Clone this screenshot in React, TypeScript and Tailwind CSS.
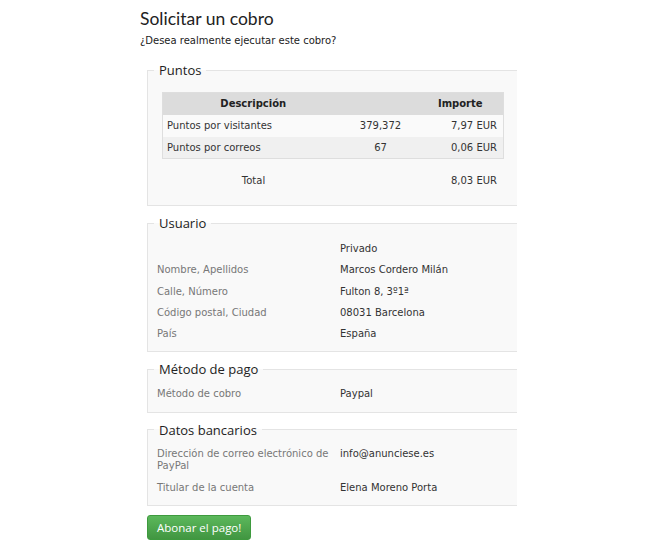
import React from "react";

const body = "font-['DejaVu_Sans',Verdana,sans-serif]";
const heading = "font-['Open_Sans',Arial,sans-serif]";

const PUNTOS = [
  { label: "Puntos por visitantes", points: "379,372", amount: "7,97 EUR" },
  { label: "Puntos por correos", points: "67", amount: "0,06 EUR" },
];

function Section({
  title,
  children,
  className,
}: {
  title: string;
  children: React.ReactNode;
  className?: string;
}) {
  return (
    <fieldset
      className={`border-y border-l border-[#e4e4e4] bg-[#f9f9f9] ${className ?? ""}`}
    >
      <legend
        className={`ml-[6px] px-[5px] text-[13px] leading-[18px] text-[#222] ${heading}`}
      >
        {title}
      </legend>
      {children}
    </fieldset>
  );
}

function Row({
  label,
  value,
  className,
}: {
  label?: string;
  value: string;
  className?: string;
}) {
  return (
    <div className={`flex min-h-[21.25px] items-start py-[4px] leading-[12px] ${className ?? ""}`}>
      <div className="w-[183px] shrink-0 pr-[10px] text-[#777]">{label}</div>
      <div className="text-[#333]">{value}</div>
    </div>
  );
}

export default function App() {
  return (
    <div className={`min-h-[550px] bg-white pl-[140px] pt-[7px] text-[10px] text-[#333] ${body}`}>
      <h1 className="font-['Lato',Arial,sans-serif] text-[17.5px] leading-[24px] text-[#222]">
        Solicitar un cobro
      </h1>
      <p className="mt-[4px] leading-[12px] text-[#222]">
        ¿Desea realmente ejecutar este cobro?
      </p>

      <div className="ml-[7px] mt-[14px] flex w-[370px] flex-col">
        <Section title="Puntos">
          <div className="pb-[14px] pl-[14px] pr-[13px] pt-[13px]">
            <table className="w-full border-collapse border border-[#dedede]">
              <thead>
                <tr className="h-[22px] bg-[#dcdcdc] font-bold text-[#222]">
                  <th className="w-[181px] text-center">Descripción</th>
                  <th className="w-[74px]" />
                  <th className="text-center">Importe</th>
                </tr>
              </thead>
              <tbody>
                {PUNTOS.map((p, i) => (
                  <tr
                    key={p.label}
                    className={`h-[22px] ${i % 2 ? "bg-[#f0f0f0]" : "bg-[#fafafa]"}`}
                  >
                    <td className="pl-[4px]">{p.label}</td>
                    <td className="text-center">{p.points}</td>
                    <td className="pr-[6px] text-right">{p.amount}</td>
                  </tr>
                ))}
              </tbody>
            </table>
            <div className="mt-[10px] flex h-[22px] items-center">
              <div className="w-[183px] text-center">Total</div>
              <div className="flex-1 pr-[7px] text-right">8,03 EUR</div>
            </div>
          </div>
        </Section>

        <Section title="Usuario" className="mt-[8px]">
          <div className="pb-[6px] pl-[9px] pt-[7px]">
            <Row value="Privado" />
            <Row label="Nombre, Apellidos" value="Marcos Cordero Milán" />
            <Row label="Calle, Número" value="Fulton 8, 3º1ª" />
            <Row label="Código postal, Ciudad" value="08031 Barcelona" />
            <Row label="País" value="España" />
          </div>
        </Section>

        <Section title="Método de pago" className="mt-[8px]">
          <div className="pb-[6px] pl-[9px] pt-[6px]">
            <Row label="Método de cobro" value="Paypal" />
          </div>
        </Section>

        <Section title="Datos bancarios" className="mt-[8px]">
          <div className="pb-[6px] pl-[9px] pt-[5px]">
            <Row
              label="Dirección de correo electrónico de PayPal"
              value="info@anunciese.es"
              className="mb-[2px]"
            />
            <Row label="Titular de la cuenta" value="Elena Moreno Porta" />
          </div>
        </Section>

        <div className="mt-[9px]">
          <button
            type="button"
            className={`h-[25px] rounded-[3px] border border-[#3e9a3e] bg-gradient-to-b from-[#5cb85c] to-[#419641] px-[9px] text-[11.5px] text-white ${heading}`}
          >
            Abonar el pago!
          </button>
        </div>
      </div>
    </div>
  );
}
